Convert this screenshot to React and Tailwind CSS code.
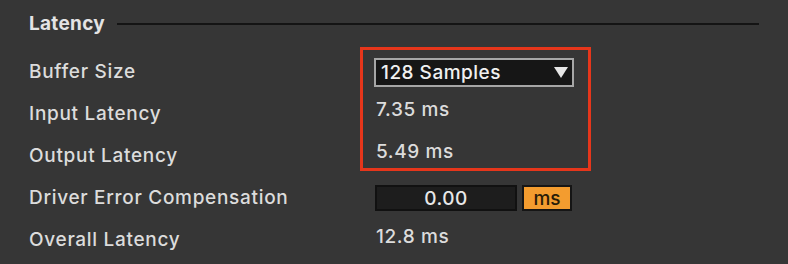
export default function App() {
  const labels = [
    "Buffer Size",
    "Input Latency",
    "Output Latency",
    "Driver Error Compensation",
    "Overall Latency",
  ];
  const lab = "flex h-[42px] items-center text-[19px] font-medium tracking-[0.7px]";
  const val = "flex h-[42px] items-center text-[19px] font-medium tracking-[0.6px]";
  return (
    <div className="relative w-[788px] h-[264px] overflow-hidden bg-[#363636] font-['Inter',sans-serif] text-[#dcdcdc]">
      <div className="flex h-[47px] items-center pl-[29px] pr-[29px]">
        <span className="text-[19px] font-bold tracking-[0.3px] text-[#e4e4e4] leading-none">Latency</span>
        <div className="ml-[12px] h-[2px] flex-1 bg-[#141414]" />
      </div>
      <div className="mt-[4px] grid grid-cols-[347px_1fr] pl-[29px]">
        <div className={lab}>{labels[0]}</div>
        <div className="flex h-[42px] items-center">
          <div className="ml-[-2px] flex h-[29px] w-[200px] items-center justify-between border-2 border-[#a6a6a6] bg-[#161616] pl-[5px] pr-[4px]">
            <span className="text-[19px] font-medium tracking-[0.5px] text-[#f0f0f0] leading-none">128 Samples</span>
            <svg width="14" height="11" viewBox="0 0 14 11">
              <path d="M0 0 H14 L7 11 Z" fill="#e6e6e6" />
            </svg>
          </div>
        </div>

        <div className={lab}>{labels[1]}</div>
        <div className={val + " pb-[8px]"}>7.35 ms</div>

        <div className={lab}>{labels[2]}</div>
        <div className={val + " pb-[8px]"}>5.49 ms</div>

        <div className={lab}>{labels[3]}</div>
        <div className="flex h-[42px] items-center gap-[5px]">
          <div className="ml-[-1px] flex h-[26px] w-[142px] items-center justify-center border-2 border-[#111111] bg-[#1d1d1d] text-[19px] font-medium tracking-[0.5px] text-[#e8e8e8] leading-none">
            0.00
          </div>
          <div className="flex h-[26px] w-[50px] items-center justify-center border-2 border-[#151515] bg-[#f39c2f] text-[19px] font-medium text-[#2a1c08] leading-none">
            ms
          </div>
        </div>

        <div className={lab}>{labels[4]}</div>
        <div className={val + " pb-[6px]"}>12.8 ms</div>
      </div>
      <div className="pointer-events-none absolute left-[360px] top-[47px] h-[124px] w-[231px] border-[3px] border-[#e6361b]" />
    </div>
  );
}
